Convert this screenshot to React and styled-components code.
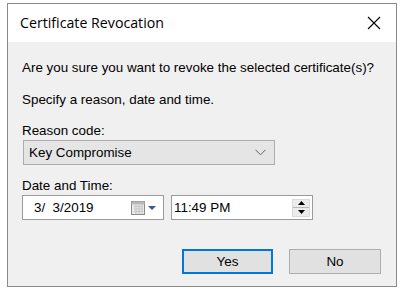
import React from "react";
import styled, { createGlobalStyle } from "styled-components";

const Global = createGlobalStyle`
  html, body { margin: 0; padding: 0; background: #ffffff; }
  body { width: 403px; height: 294px; overflow: hidden; }
`;

const Page = styled.div`
  padding: 3px 0 0 7px;
`;

const Window = styled.div`
  width: 388px;
  height: 282px;
  border: 1px solid #8a8a8a;
  display: flex;
  flex-direction: column;
  font-family: "Liberation Sans", Arial, sans-serif;
  font-size: 13.4px;
  color: #000;
`;

const TitleBar = styled.div`
  height: 38px;
  background: #ffffff;
  display: flex;
  align-items: center;
  justify-content: space-between;
  padding: 0 14px 0 12px;
  flex-shrink: 0;
`;

const Title = styled.div`
  font-family: "Open Sans", "Noto Sans", sans-serif;
  font-size: 14.2px;
  color: #000;
  margin-top: -2px;
`;

const Body = styled.div`
  flex: 1;
  background: #f0f0f0;
  padding: 18px 0 0 14px;
  display: flex;
  flex-direction: column;
`;

const Text = styled.div`
  line-height: 15px;
  margin-top: ${(p) => p.$mt || 0}px;
  margin-bottom: ${(p) => p.$mb || 0}px;
`;

const Select = styled.div`
  box-sizing: border-box;
  width: 252px;
  height: 25px;
  background: #e5e5e5;
  border: 1px solid #adadad;
  display: flex;
  align-items: center;
  justify-content: space-between;
  padding: 0 8px 0 5px;
  margin: 2px 0 0 1px;
`;

const Row = styled.div`
  display: flex;
  gap: 7px;
  margin: 2px 0 0 0;
`;

const Field = styled.div`
  box-sizing: border-box;
  width: 142px;
  height: 25px;
  background: #ffffff;
  border: 1px solid #9a9a9a;
  display: flex;
  align-items: center;
  justify-content: space-between;
  padding: 0 ${(p) => p.$pr}px 0 ${(p) => p.$pl}px;
`;

const Spin = styled.div`
  width: 18px;
  height: 18px;
  display: flex;
  flex-direction: column;
  background: #ececec;
  border: 1px solid #dadada;
  box-sizing: border-box;
`;

const SpinHalf = styled.div`
  flex: 1;
  display: flex;
  align-items: center;
  justify-content: center;
  border-top: ${(p) => (p.$bottom ? "1px solid #b8b8b8" : "none")};
`;

const Buttons = styled.div`
  display: flex;
  justify-content: flex-end;
  gap: 16px;
  padding-right: 15px;
  margin-top: 29px;
`;

const Button = styled.div`
  box-sizing: border-box;
  width: ${(p) => (p.$default ? 91 : 92)}px;
  height: 25px;
  background: #e1e1e1;
  border: ${(p) => (p.$default ? "2px solid #0078d7" : "1px solid #adadad")};
  display: flex;
  align-items: center;
  justify-content: center;
`;

const CloseIcon = () => (
  <svg width="16" height="16" viewBox="0 0 16 16">
    <path d="M2 2 L14 14 M14 2 L2 14" stroke="#000" strokeWidth="1.1" fill="none" />
  </svg>
);

const Chevron = () => (
  <svg width="11" height="7" viewBox="0 0 11 7">
    <path d="M0.5 0.8 L5.5 5.8 L10.5 0.8" stroke="#606060" strokeWidth="1" fill="none" />
  </svg>
);

const CalendarDrop = () => (
  <svg width="28" height="16" viewBox="0 0 28 16">
    <rect x="0.5" y="1.5" width="13" height="13" fill="#e8e8e8" stroke="#8c8c8c" />
    <rect x="0.5" y="1.5" width="13" height="3" fill="#b8b8b8" />
    <path d="M3 6.5 H12 M3 9 H12 M3 11.5 H12 M5 5 V14 M8 5 V14 M11 5 V14" stroke="#c6c6c6" strokeWidth="1" />
    <path d="M17 6 L25 6 L21 10 Z" fill="#3c5a86" />
  </svg>
);

const SpinArrow = ({ up }) => (
  <svg width="7" height="4" viewBox="0 0 7 4">
    <path d={up ? "M0 4 L7 4 L3.5 0 Z" : "M0 0 L7 0 L3.5 4 Z"} fill="#000" />
  </svg>
);

export default function App() {
  return (
    <Page>
      <Global />
      <Window>
        <TitleBar>
          <Title>Certificate Revocation</Title>
          <CloseIcon />
        </TitleBar>
        <Body>
          <Text $mb={17}>Are you sure you want to revoke the selected certificate(s)?</Text>
          <Text $mb={16}>Specify a reason, date and time.</Text>
          <Text>Reason code:</Text>
          <Select>
            <span>Key Compromise</span>
            <Chevron />
          </Select>
          <Text $mt={13}>Date and Time:</Text>
          <Row>
            <Field $pl={11} $pr={4}>
              <span>3/&nbsp; 3/2019</span>
              <CalendarDrop />
            </Field>
            <Field $pl={2} $pr={2}>
              <span>11:49 PM</span>
              <Spin>
                <SpinHalf><SpinArrow up /></SpinHalf>
                <SpinHalf $bottom><SpinArrow /></SpinHalf>
              </Spin>
            </Field>
          </Row>
          <Buttons>
            <Button $default>Yes</Button>
            <Button>No</Button>
          </Buttons>
        </Body>
      </Window>
    </Page>
  );
}
